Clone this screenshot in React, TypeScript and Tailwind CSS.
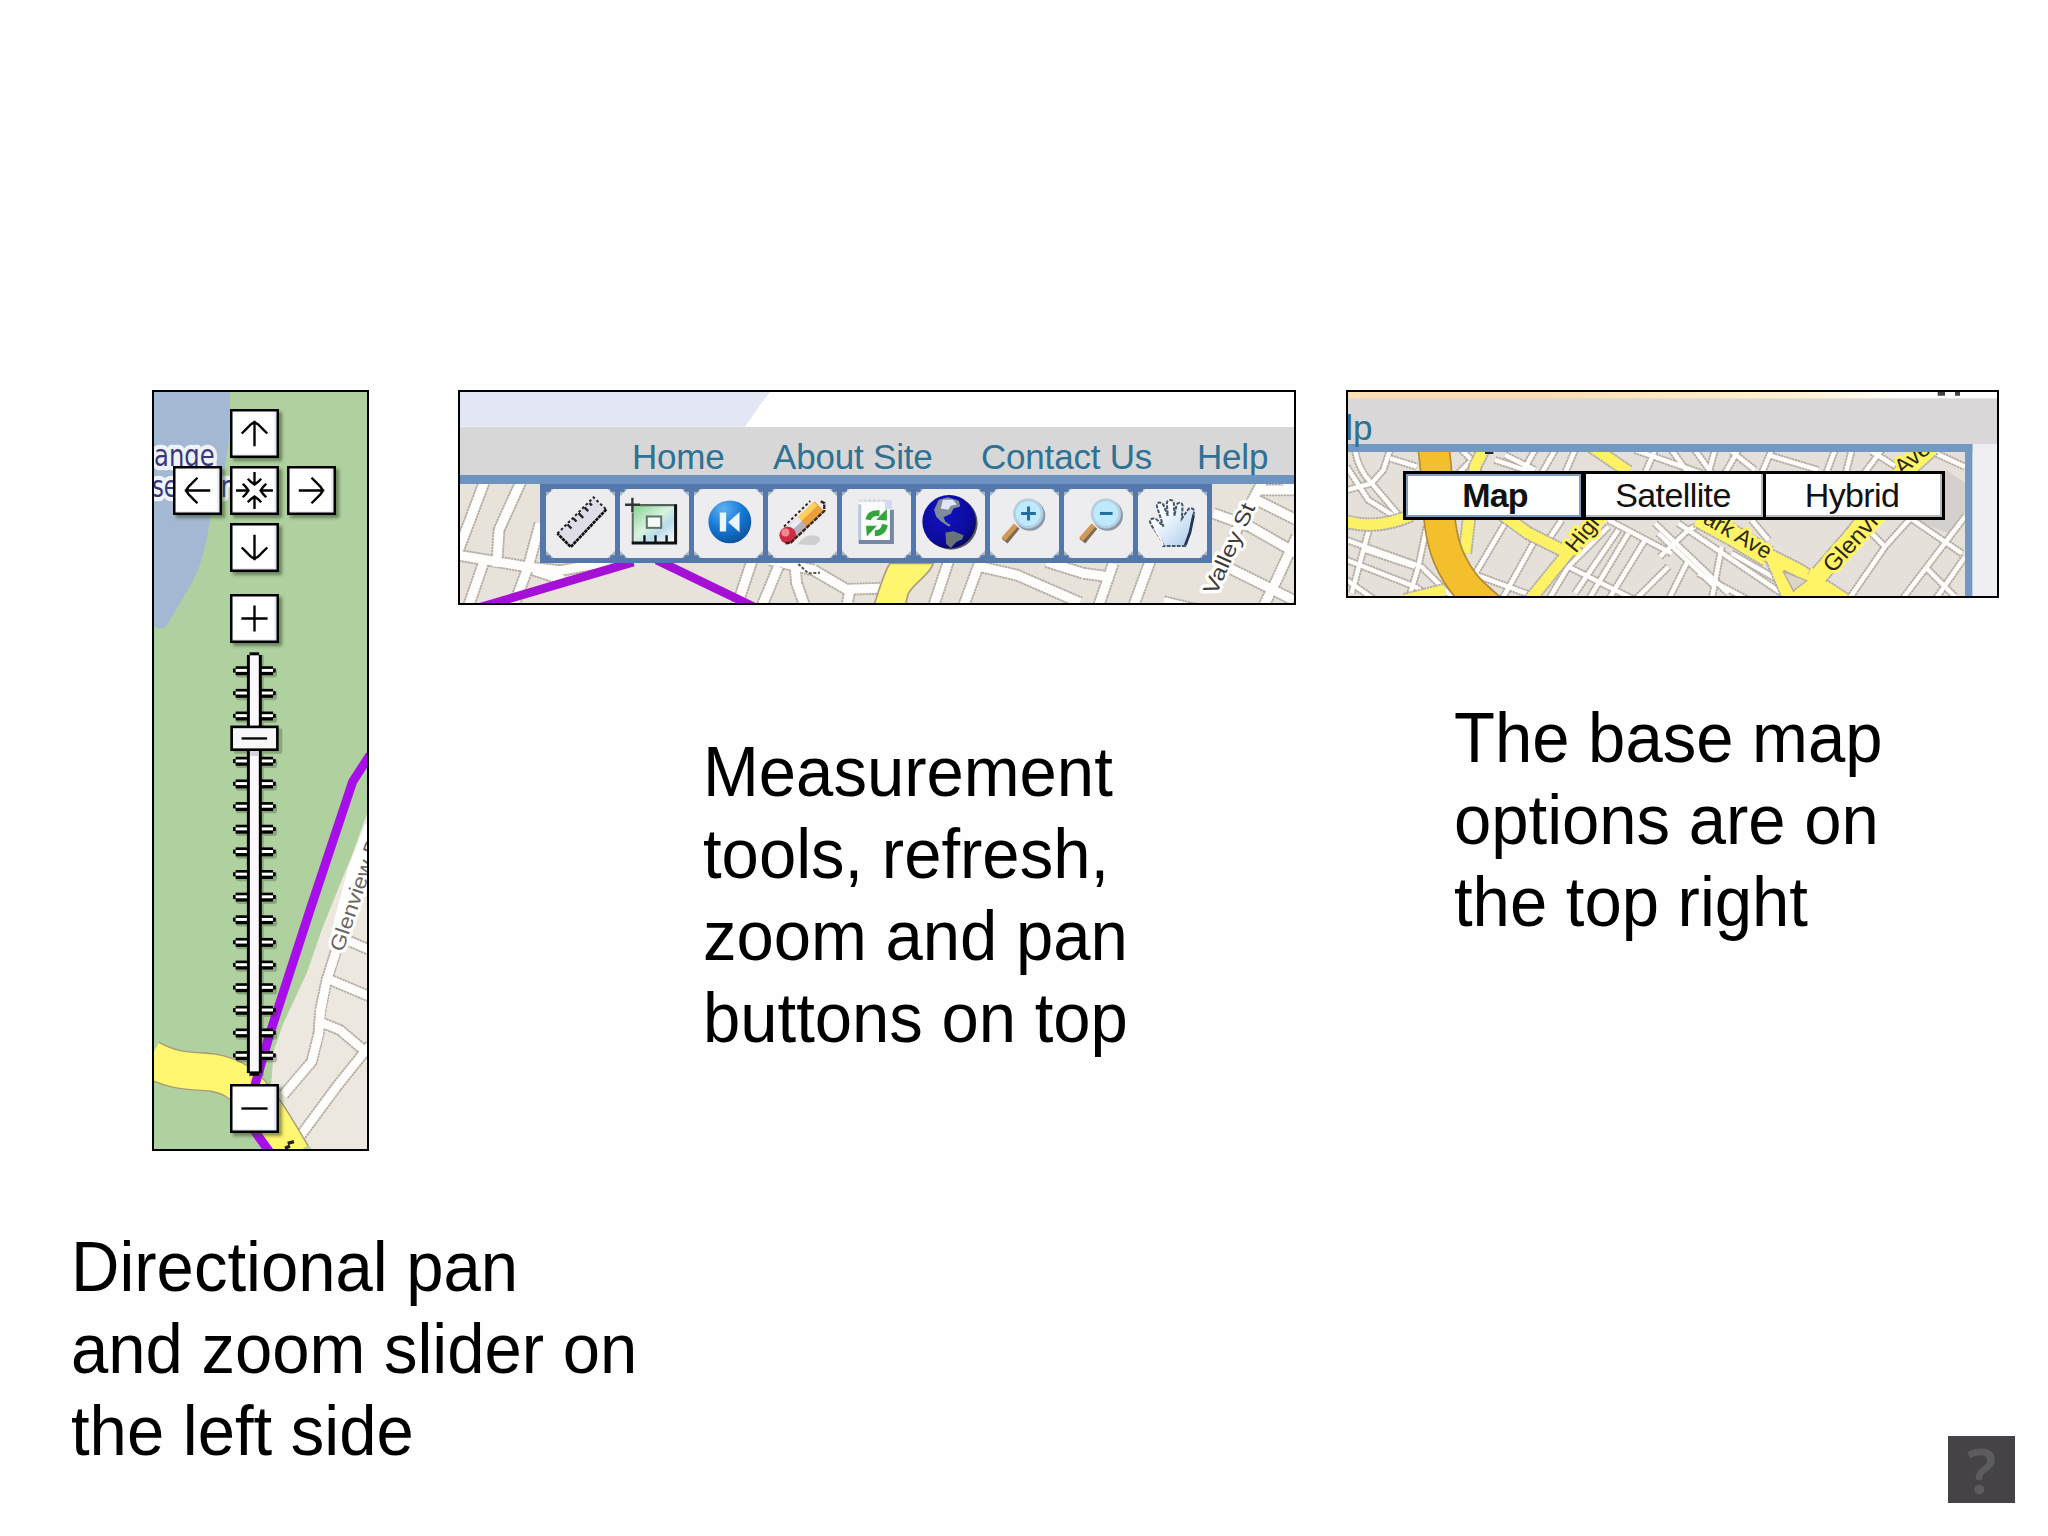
import type { ReactNode } from "react";

const S = 1 / 3;

/* A street: grey casing under a white (or coloured) fill. */
function Roads({ paths, w = 26, fill = "#fffdfb", edge = "#b3aca3" }: { paths: string[]; w?: number; fill?: string; edge?: string }) {
  return (
    <g fill="none" strokeLinejoin="round" strokeLinecap="butt">
      {paths.map((d) => (
        <path key={d} d={d} stroke={edge} strokeWidth={w + 11} strokeDasharray="7 2" />
      ))}
      {paths.map((d) => (
        <path key={d} d={d} stroke={fill} strokeWidth={w} />
      ))}
    </g>
  );
}

function StreetName({ x, y, r, children, size = 62, len, fill = "#3f3b3b", halo = "#ffffff" }: { x: number; y: number; r: number; children: string; size?: number; len?: number; fill?: string; halo?: string }) {
  return (
    <text transform={`translate(${x} ${y}) rotate(${r})`} fontFamily='"Liberation Sans", sans-serif' fontSize={size} textLength={len} lengthAdjust="spacingAndGlyphs" fill={fill} stroke={halo} strokeWidth={18} strokeLinejoin="round" paintOrder="stroke">
      {children}
    </text>
  );
}

function SquareButton({ children, label, className = "" }: { children: ReactNode; label: string; className?: string }) {
  return (
    <button aria-label={label} className={`size-[49px] bg-[#fefefe] shadow-[inset_0_0_0_2.5px_#000,inset_-5px_-4px_0_#e8edf6,3px_3px_3px_rgba(40,60,30,0.5)] ${className}`}>
      <svg viewBox="0 0 146 146" className="block size-full" fill="none" stroke="#000" strokeWidth="7">
        {children}
      </svg>
    </button>
  );
}

const arrow = "M73 111V35M35 73L46 62L54 54L62 46L73 39L84 46L92 54L100 62L111 73";

function ZoomSlider() {
  const ticks = Array.from({ length: 18 }, (_, i) => 55 + 68.35 * i);
  return (
    <svg viewBox="0 0 160 1278" className="block h-[426px] w-[53px] overflow-visible">
      <g fill="#2c3d25" opacity="0.28">
        {ticks.map((y) => (
          <rect key={y} x="18" y={y - 7} width="124" height="28" rx="8" />
        ))}
        <rect x="58" y="8" width="44" height="1272" />
        <rect x="12" y="230" width="146" height="76" rx="5" />
      </g>
      {ticks.map((y) => (
        <g key={y}>
          <rect x="17" y={y - 13} width="113" height="27" />
          <rect x="9" y={y - 6} width="129" height="12" />
          <rect x="17" y={y - 5} width="113" height="9" fill="#fff" />
        </g>
      ))}
      <rect x="51" y="8" width="45" height="1262" />
      <rect x="59" y="0" width="29" height="1278" />
      <rect x="60" y="9" width="27" height="1256" fill="#faf8fb" />
      <rect x="61" y="299" width="25" height="14" fill="#d3d2d6" />
      <rect x="5" y="225" width="138" height="69" fill="#f7f6f9" stroke="#000" strokeWidth="8" />
      <path d="M35 260H112" stroke="#000" strokeWidth="7" />
    </svg>
  );
}

function PanMap() {
  return (
    <svg viewBox="154 392 213 757" className="absolute inset-0 block h-full w-full">
      <rect x="150" y="390" width="220" height="762" fill="#afd19f" />
      <g transform={`translate(140 380) scale(${S})`}>
        <path d="M38 30H270C271 120 269 190 258 235C250 300 232 370 210 415C203 480 183 560 157 605L108 690L75 743L55 746L38 735Z" fill="#a3b8d3" />
        <g fontFamily='"DejaVu Sans", sans-serif' fontSize="88" fill="#39377a" stroke="#eef3fb" strokeWidth="26" strokeLinejoin="round" paintOrder="stroke">
          <text x="42" y="257" textLength="182" lengthAdjust="spacingAndGlyphs">ange</text>
          <text x="36" y="352" textLength="234" lengthAdjust="spacingAndGlyphs">servoir</text>
        </g>
      </g>
      <g transform={`translate(140 640) scale(${S})`}>
        <path d="M690 495L640 635L595 745L545 870L500 1000L430 1150L402 1230L392 1345L520 1535H690Z" fill="#ece7df" />
        <path d="M700 560L650 690L612 830L592 930" stroke="#fff" strokeWidth="52" fill="none" />
        <Roads
          w={25}
          paths={[
            "M592 920L560 1020L541 1110L536 1180L515 1265L430 1365",
            "M560 1015L690 1070",
            "M545 1148L600 1170L680 1238",
            "M690 1215L590 1340L478 1492",
            "M620 900L690 930",
          ]}
        />
        <path d="M587 940L560 1022L543 1110L537 1180L515 1265L430 1365" fill="none" stroke="#fffdfb" strokeWidth="25" />
        <path d="M30 1256C110 1300 160 1290 220 1298C310 1315 350 1360 455 1545" fill="none" stroke="#a99a79" strokeWidth="116" />
        <path d="M30 1256C110 1300 160 1290 220 1298C310 1315 350 1360 455 1545" fill="none" stroke="#fff76f" strokeWidth="108" />
        <path d="M690 345L638 425L515 795L390 1180L345 1335V1475L392 1540" fill="none" stroke="#a80ee9" strokeWidth="27" />
        <path d="M435 1525L450 1518M443 1510L462 1505" stroke="#222" strokeWidth="10" />
        <StreetName x={608} y={938} r={-71} size={62} len={355} fill="#6c6665">Glenview D</StreetName>
      </g>
    </svg>
  );
}

function PanPanel() {
  return (
    <section className="relative h-[761px] w-[217px] shrink-0 overflow-hidden border-2 border-black">
      <PanMap />
      <div className="absolute top-[17px] left-[19px] flex flex-col items-center">
        <div className="grid grid-cols-3 gap-2">
          <SquareButton label="Pan up" className="col-start-2"><path d={arrow} /></SquareButton>
          <SquareButton label="Pan left" className="col-start-1"><path d={arrow} transform="rotate(-90 73 73)" /></SquareButton>
          <SquareButton label="Center">
            {[0, 90, 180, 270].map((a) => (
              <path key={a} d="M73 18V56M53 38L62 47L73 55L84 47L93 38" transform={`rotate(${a} 73 73)`} />
            ))}
          </SquareButton>
          <SquareButton label="Pan right"><path d={arrow} transform="rotate(90 73 73)" /></SquareButton>
          <SquareButton label="Pan down" className="col-start-2"><path d={arrow} transform="rotate(180 73 73)" /></SquareButton>
        </div>
        <SquareButton label="Zoom in" className="mt-[22px]"><path d="M34 73H112M73 34V112" /></SquareButton>
        <div className="mt-2 flex w-[49px]"><ZoomSlider /></div>
        <SquareButton label="Zoom out" className="mt-[7px]"><path d="M34 73H112" /></SquareButton>
      </div>
    </section>
  );
}

function ToolMap() {
  return (
    <svg viewBox="460 392 834 211" className="absolute inset-0 block h-full w-full">
      <rect x="458" y="390" width="840" height="216" fill="#fff" />
      <g transform={`translate(450 380) scale(${S})`}>
        <path d="M30 30H965L930 75L885 140H30Z" fill="#e3e6f5" />
        <rect x="30" y="300" width="2510" height="380" fill="#e8e3da" />
        <Roads
          w={27}
          paths={[
            "M105 300L60 420L20 525",
            "M215 300L165 410L147 450L140 560",
            "M270 430L235 560L190 680",
            "M100 550L55 680",
            "M20 525L110 540L240 562L330 572L480 545",
            "M250 570L340 600",
            "M905 545L860 680",
            "M985 560L935 680",
            "M1035 560L1040 610L1065 680",
            "M960 540L1090 570L1190 628L1290 625",
            "M1200 628L1190 680",
            "M1495 545L1450 680",
            "M1590 545L1540 680",
            "M1590 560L1700 585L1890 668",
            "M1790 545L1900 580L1975 590",
            "M1990 550L1945 680",
            "M2100 545L2050 680",
            "M2140 665L2290 700",
            "M2290 400L2400 440L2540 520",
            "M2440 300L2360 450L2330 560L2530 660",
            "M2400 350L2540 420",
            "M2420 330L2540 330",
            "M2500 300L2540 320",
            "M2540 470L2480 600L2440 680",
          ]}
        />
        <path d="M1320 550H1450C1440 585 1400 600 1375 640L1365 680H1270C1285 640 1300 580 1320 550Z" fill="#fff670" stroke="#a99e80" strokeWidth="5" />
        <path d="M90 682L550 546M620 540L910 680" fill="none" stroke="#a60fd6" strokeWidth="26" />
        <path d="M1045 552L1075 580L1110 578" stroke="#555" strokeWidth="6" fill="none" strokeDasharray="9 5" />
        <StreetName x={2298} y={648} r={-66} size={64} len={292}>Valley St</StreetName>
      </g>
    </svg>
  );
}

const icons: { label: string; art: ReactNode }[] = [
  {
    label: "Measure distance",
    art: (
      <>
        <path d="M142 25L180 61L74 173L34 133Z" fill="#dedde8" />
        <path d="M34 133L142 25L180 61" fill="none" stroke="#222" strokeWidth="6" strokeDasharray="8 7" />
        <path d="M180 61L74 173L34 133" fill="none" stroke="#111" strokeWidth="8" strokeDasharray="10 2" />
        <path d="M64 106L76 118M82 88L91 97M97 72L111 86M115 55L126 66M130 42L137 49" stroke="#222" strokeWidth="7" />
      </>
    ),
  },
  {
    label: "Measure area",
    art: (
      <>
        <rect x="38" y="48" width="130" height="112" fill="url(#areaFill)" />
        <path d="M60 48H170" stroke="#54625a" strokeWidth="7" />
        <path d="M38 70V162" stroke="#666" strokeWidth="6" />
        <path d="M166 46V161H35" fill="none" stroke="#111" strokeWidth="9" />
        <path d="M73 160V138M106 160V138M139 160V138" stroke="#111" strokeWidth="7" />
        <rect x="80" y="82" width="43" height="34" fill="#f4fbf6" stroke="#617069" strokeWidth="6" />
        <path d="M15 47H60M37 26V69" stroke="#333" strokeWidth="7" />
      </>
    ),
  },
  {
    label: "Previous view",
    art: (
      <>
        <circle cx="107" cy="98" r="64" fill="url(#blueBall)" />
        <path d="M77 70H96V127H77ZM102 99L136 69V129Z" fill="#eaf6ff" />
      </>
    ),
  },
  {
    label: "Erase",
    art: (
      <>
        <path d="M88 165Q108 135 138 138Q172 146 140 168Z" fill="#d0cfd0" />
        <path d="M101 102L154 52" stroke="#e99f3c" strokeWidth="40" strokeLinejoin="round" />
        <path d="M92 92L142 44" stroke="#ffcf5c" strokeWidth="17" />
        <path d="M70 129L103 99" stroke="#b5b1bf" strokeWidth="42" />
        <path d="M64 119L95 90" stroke="#eceaf2" strokeWidth="17" />
        <circle cx="59" cy="138" r="25" fill="#cf2c44" />
        <circle cx="52" cy="130" r="12" fill="#f08a92" />
        <path d="M48 112L126 36" fill="none" stroke="#222" strokeWidth="6" strokeDasharray="8 7" />
        <path d="M52 162L68 160L168 66V42L155 36" fill="none" stroke="#3a2418" strokeWidth="7" strokeDasharray="13 3" />
      </>
    ),
  },
  {
    label: "Refresh",
    art: (
      <>
        <path d="M50 40H150V162H50Z" fill="#fbfdfd" />
        <path d="M53 46V158" stroke="#b9c7dc" strokeWidth="9" />
        <path d="M149 62V158H50" fill="none" stroke="#7888a3" strokeWidth="12" />
        <path d="M128 32H150V60H128Z" fill="#d7d9f3" />
        <path d="M50 34H128" stroke="#d2d6dc" strokeWidth="6" strokeDasharray="9 5" />
        <g fill="none" stroke="#2fa637" strokeWidth="17">
          <path d="M78 92Q82 70 112 72" />
          <path d="M128 106Q124 132 98 132" />
        </g>
        <path d="M102 92L134 60V94Z" fill="#2fa637" />
        <path d="M72 110H104L74 142Z" fill="#2fa637" />
      </>
    ),
  },
  {
    label: "Full extent",
    art: (
      <>
        <circle cx="105" cy="102" r="79" fill="#565d5a" />
        <circle cx="99" cy="98" r="80" fill="url(#globe)" />
        <path d="M68 32L95 25L128 35L132 52L112 58L104 74L82 84L88 98L104 108L98 112L74 96L60 82L54 62Z" fill="#7f8b99" />
        <path d="M80 32L110 32L122 46L104 50L96 62L74 58Z" fill="#dfe5fa" />
        <path d="M88 130L112 126L142 138L138 150L120 158L104 176L90 164Z" fill="#68747a" />
      </>
    ),
  },
  { label: "Zoom in", art: <Lens x={114} sign="M93 73H137M115 52V94" /> },
  { label: "Zoom out", art: <Lens x={125} sign="M107 73H145" /> },
  {
    label: "Pan",
    art: (
      <>
        <path d="M75 170C72 145 42 120 36 98C34 88 50 84 58 93L76 112L57 54C53 38 70 37 76 48L89 80L86 42C87 30 105 30 107 42L109 80L115 48C120 36 134 40 133 52L131 88L149 62C155 52 171 59 167 70L155 130L141 170Z" fill="url(#glove)" stroke="#44566c" strokeWidth="6" strokeDasharray="11 4" />
        <path d="M74 170C72 150 60 135 50 120" fill="none" stroke="#fff" strokeWidth="5" />
        <path d="M166 78L155 130L141 168" fill="none" stroke="#26364c" strokeWidth="8" />
      </>
    ),
  },
];

function Lens({ x, sign }: { x: number; sign: string }) {
  return (
    <>
      <path d={`M${x - 34} 112L${x - 70} 156`} stroke="#7d6b55" strokeWidth="22" />
      <path d={`M${x - 37} 108L${x - 74} 150`} stroke="#d09a58" strokeWidth="15" />
      <circle cx={x + 5} cy="79" r="46" fill="#8d9aa6" />
      <circle cx={x} cy="73" r="45" fill="#b3cfe2" />
      <circle cx={x} cy="73" r="37" fill="#bfeafb" />
      <path d={sign} stroke="#246c9e" strokeWidth="9" />
    </>
  );
}

function Defs() {
  return (
    <svg className="absolute size-0">
      <defs>
        <linearGradient id="areaFill" x1="0" y1="0" x2="1" y2="1">
          <stop offset="0" stopColor="#7fd391" />
          <stop offset="0.45" stopColor="#d9f3dd" />
          <stop offset="0.65" stopColor="#b9dcec" />
          <stop offset="1" stopColor="#fff" />
        </linearGradient>
        <radialGradient id="blueBall" cx="0.35" cy="0.2" r="0.9">
          <stop offset="0" stopColor="#5fb2f2" />
          <stop offset="0.5" stopColor="#1579d6" />
          <stop offset="1" stopColor="#0b4c92" />
        </radialGradient>
        <radialGradient id="globe" cx="0.4" cy="0.35" r="0.7">
          <stop offset="0" stopColor="#1212c4" />
          <stop offset="0.75" stopColor="#0c0b9c" />
          <stop offset="1" stopColor="#080852" />
        </radialGradient>
        <linearGradient id="glove" x1="0" y1="0" x2="1" y2="1">
          <stop offset="0.3" stopColor="#fafdff" />
          <stop offset="1" stopColor="#a9c8ec" />
        </linearGradient>
      </defs>
    </svg>
  );
}

function ToolPanel() {
  return (
    <section className="relative flex h-[215px] w-[838px] flex-col overflow-hidden border-2 border-black">
      <ToolMap />
      <nav className="relative mt-[35px] flex h-[48px] shrink-0 bg-[#d8d7d8] pl-[172px] text-[35px] leading-[59px] tracking-[-0.2px] whitespace-nowrap text-[#2d7195]">
        <a className="w-[141px]">Home</a>
        <a className="w-[208px]">About Site</a>
        <a className="w-[216px]">Contact Us</a>
        <a>Help</a>
      </nav>
      <div className="relative h-[9px] shrink-0 bg-[#6d93c1]" />
      <div className="relative ml-[80px] flex h-[79px] w-[672px] gap-[5px] bg-[#5478ae] pt-[5px] pl-[6px]">
        {icons.map(({ label, art }) => (
          <button key={label} aria-label={label} className="size-[69px] shrink-0 overflow-hidden">
            <svg viewBox="0 0 206 206" className="block size-full" fill="none">
              <path d="M14 0H192V8H206V198H192V206H14V198H0V8H14Z" fill="#a7b5bf" />
              <path d="M22 0H184L206 22V184L184 206H22L0 184V22Z" fill="#edecef" />
              {art}
            </svg>
          </button>
        ))}
      </div>
    </section>
  );
}

function BaseMap() {
  return (
    <svg viewBox="1348 392 649 204" className="absolute inset-0 block h-full w-full">
      <defs>
        <linearGradient id="peach" x1="0" x2="1">
          <stop offset="0.3" stopColor="#fcdfb4" />
          <stop offset="0.7" stopColor="#fff3d4" />
          <stop offset="0.85" stopColor="#fff" />
        </linearGradient>
      </defs>
      <g transform={`translate(1335 380) scale(${S})`}>
        <rect x="30" y="30" width="1980" height="30" fill="url(#peach)" />
        <path d="M1808 40H1830M1860 40H1875" stroke="#444" strokeWidth="14" />
        <rect x="30" y="192" width="1980" height="480" fill="#efeef2" />
        <rect x="30" y="192" width="1861" height="480" fill="#e5e0d9" />
        <path d="M1835 270L1891 310V400L1840 460L1740 420Z" fill="#d3d0cd" />
        <Roads
          w={13}
          paths={[
            "M60 210Q70 270 110 310L195 410",
            "M165 210L145 270L110 310L35 330",
            "M165 235L245 260",
            "M35 260L100 360L180 410",
            "M35 480L260 560L350 650",
            "M100 455L50 640", "M35 540L240 620L300 660", "M35 600L120 660", "M275 440L250 560L220 660",
            "M90 510L240 560", "M380 210L410 240L360 290",
            "M510 225L600 270", "M600 210L560 280", "M660 210L620 280", "M720 210L690 280", "M480 240L600 280",
            "M510 430L410 600", "M600 480L500 660", "M410 580L600 650",
            "M680 420L640 480", "M820 440L700 560L640 660", "M850 450L720 640", "M880 460L760 660", "M930 480L820 660", "M700 560L860 640L900 660", "M820 420L1010 520", "M960 430L1180 640",
            "M900 210L1100 280", "M960 210L930 280", "M1010 210L1060 280", "M1080 210L1130 280", "M1140 210L1120 280", "M1210 210L1170 280", "M1190 215L1260 270", "M1310 210L1280 280", "M1300 225L1450 270", "M1500 210L1470 290", "M1550 210L1530 290", "M1640 210L1580 290", "M1610 215L1700 270", "M1780 210L1890 260",
            "M975 530L1060 450L1120 420", "M970 460L1140 620", "M1030 430L1340 640", "M1060 540L1000 660", "M1160 500L1130 660", "M1090 580L1240 660", "M1190 520L1330 600", "M1250 420L1300 480", "M1000 560L900 660",
            "M1610 460L1650 500L1740 400", "M1650 500L1540 660", "M1720 410L1880 520", "M1890 410L1700 660", "M1770 560L1860 650", "M1890 530L1800 660",
          ]}
        />
        <Roads w={32} fill="#fdf263" paths={["M35 425Q130 450 230 405", "M450 200L420 260L390 520", "M470 380L580 460L700 520", "M210 660L330 630", "M770 200L880 275", "M800 400L690 530L580 665"]} />
        <Roads w={58} fill="#fff465" paths={["M1090 410L1200 470L1300 530"]} />
        <Roads w={36} fill="#fff465" paths={["M1290 520L1390 570L1530 660", "M1310 530L1365 660", "M1430 600L1380 660"]} />
        <Roads w={50} fill="#fff465" paths={["M1790 200L1690 290L1560 460L1440 600"]} />
        <path d="M1335 560L1390 580L1310 520ZM1430 560L1520 655H1390Z" fill="#fff465" />
        <path d="M1345 575L1415 602L1375 632Z" fill="#ded6c5" stroke="#b3aca3" strokeWidth="4" />
        <path d="M295 200C315 330 300 430 340 530C375 610 410 640 470 690" stroke="#b38b35" strokeWidth="98" fill="none" />
        <path d="M295 200C315 330 300 430 340 530C375 610 410 640 470 690" stroke="#f3bf2c" strokeWidth="88" fill="none" />
        <path d="M450 218H475" stroke="#222" strokeWidth="8" />
        <StreetName x={722} y={522} r={-51} size={68} fill="#2a2718" halo="#fff465">High</StreetName>
        <StreetName x={1062} y={405} r={30} size={68} len={268} fill="#2a2718" halo="#fff465">Park Ave</StreetName>
        <StreetName x={1494} y={582} r={-48} size={70} len={300} fill="#2a2718" halo="#fff465">Glenview</StreetName>
        <StreetName x={1702} y={288} r={-40} size={68} fill="#2a2718" halo="#fff465">Ave</StreetName>
        <rect x="30" y="55" width="1980" height="137" fill="#d9d7d8" />
        <rect x="30" y="192" width="1882" height="24" fill="#7299c4" />
        <rect x="1890" y="192" width="22" height="480" fill="#7299c4" />
      </g>
    </svg>
  );
}

function BasePanel() {
  return (
    <section className="relative flex h-[208px] w-[653px] flex-col overflow-hidden border-2 border-black">
      <BaseMap />
      <div className="relative -ml-[63px] flex h-[53px] text-[35px] leading-[71px] tracking-[-0.2px] text-[#2d7195]">
        <div className="ml-[16px]">Help</div>
      </div>
      <div className="relative mt-[26px] ml-[55px] flex h-[49px] w-[542px] bg-black p-[3px] text-center text-[34px] leading-[41px] tracking-[-0.6px] text-[#111]">
        <button className="mr-[5px] w-[175px] bg-[#fdfefe] pl-[3px] font-bold tracking-[-0.9px] shadow-[inset_0_0_0_2px_#7f9cc2]">Map</button>
        <button className="mr-[3px] w-[177px] bg-[#fefefe] pr-[3px] shadow-[inset_-2px_-2px_0_#b9b9bb]">Satellite</button>
        <button className="flex-1 bg-[#fefefe] pr-[4px] shadow-[inset_-2px_-2px_0_#b9b9bb]">Hybrid</button>
      </div>
    </section>
  );
}

function Caption({ lines, className = "" }: { lines: string[]; className?: string }) {
  return (
    <p className={`origin-left scale-x-[0.944] text-[71px] leading-[82px] whitespace-nowrap text-black ${className}`}>
      {lines.map((l) => (
        <span key={l} className="block">{l}</span>
      ))}
    </p>
  );
}

export default function App() {
  return (
    <main className="relative flex h-[1536px] w-[2048px] overflow-hidden bg-[#fefefe] pt-[390px] font-['Liberation_Sans',Arial,sans-serif]">
      <Defs />
      <div className="w-[458px] shrink-0">
        <div className="pl-[152px]"><PanPanel /></div>
        <Caption className="mt-[75px] ml-[71px] w-[600px]" lines={["Directional pan", "and zoom slider on", "the left side"]} />
      </div>
      <div className="w-[888px] shrink-0">
        <ToolPanel />
        <Caption className="mt-[126px] ml-[245px] w-[460px]" lines={["Measurement", "tools, refresh,", "zoom and pan", "buttons on top"]} />
      </div>
      <div className="w-[702px] shrink-0">
        <BasePanel />
        <Caption className="mt-[99px] ml-[108px] w-[460px]" lines={["The base map", "options are on", "the top right"]} />
      </div>
      <button className="absolute top-[1436px] left-[1948px] flex size-[67px] items-center justify-center bg-[#454347] font-['Noto_Sans'] text-[64px] leading-none font-semibold text-[#5c5b5e]">?</button>
    </main>
  );
}
